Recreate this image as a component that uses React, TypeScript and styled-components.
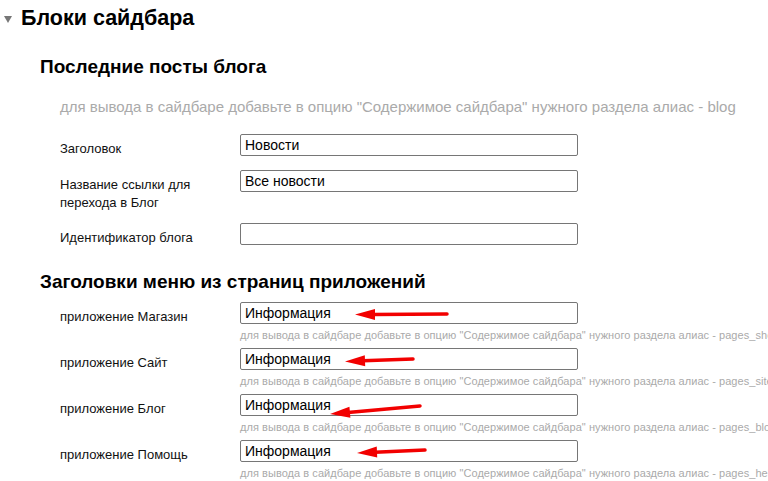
import React from "react";
import styled, { createGlobalStyle } from "styled-components";

const Global = createGlobalStyle`
  html, body { margin: 0; padding: 0; background: #fff; overflow: hidden; }
  body { font-family: "Liberation Sans", Arial, sans-serif; color: #000; }
`;

const Page = styled.div`
  width: 768px;
  height: 481px;
  overflow: hidden;
  padding-top: 6px;
  box-sizing: border-box;
`;

const TitleRow = styled.div`
  display: flex;
  align-items: center;
  gap: 9px;
  padding-left: 4px;
  height: 24px;
`;

const Caret = styled.span`
  width: 0;
  height: 0;
  border-left: 4px solid transparent;
  border-right: 4px solid transparent;
  border-top: 7px solid #777;
  margin-top: 2px;
`;

const Title = styled.h1`
  margin: 0;
  font-size: 21.5px;
  line-height: 24px;
  font-weight: bold;
`;

const Section = styled.section<{ $top: number }>`
  margin-top: ${(p) => p.$top}px;
  padding-left: 40px;
`;

const SectionTitle = styled.h2<{ $gap: number }>`
  margin: 0 0 ${(p) => p.$gap}px 0;
  font-size: 19px;
  line-height: 22px;
  height: 22px;
  font-weight: bold;
`;

const Intro = styled.div`
  padding-left: 20px;
  font-size: 15px;
  line-height: 16px;
  height: 16px;
  color: #aaa;
  white-space: nowrap;
  margin-bottom: 19px;
`;

const Rows = styled.div<{ $gap: number }>`
  display: flex;
  flex-direction: column;
  gap: ${(p) => p.$gap}px;
  padding-left: 20px;
`;

const Row = styled.div`
  display: grid;
  grid-template-columns: 180px 1fr;
  align-items: start;
`;

const Label = styled.label<{ $lh?: number }>`
  font-size: 13px;
  line-height: ${(p) => p.$lh ?? 18}px;
  padding-top: 6px;
  color: #111;
`;

const Field = styled.div`
  position: relative;
  display: flex;
  flex-direction: column;
  min-width: 0;
`;

const Input = styled.input`
  width: 338px;
  height: 22px;
  box-sizing: border-box;
  border: 1px solid #767676;
  border-radius: 2px;
  padding: 0 4px;
  font-family: "Liberation Sans", Arial, sans-serif;
  font-size: 14px;
  color: #000;
  background: #fff;
  outline: none;
`;

const Hint = styled.div`
  margin-top: 4px;
  font-size: 11px;
  letter-spacing: 0.05px;
  line-height: 14px;
  color: #aaa;
  white-space: nowrap;
`;

const ArrowSvg = styled.svg`
  position: absolute;
  left: 0;
  top: 0;
  overflow: visible;
  pointer-events: none;
`;

type ArrowProps = { tx: number; ty: number; hx: number; hy: number };

function Arrow({ tx, ty, hx, hy }: ArrowProps) {
  const dx = hx - tx;
  const dy = hy - ty;
  const len = Math.hypot(dx, dy);
  const ux = dx / len;
  const uy = dy / len;
  const hl = 20;
  const hw = 5.5;
  const bx = hx - ux * hl;
  const by = hy - uy * hl;
  const nx = -uy;
  const ny = ux;
  const pts = `${hx},${hy} ${bx + nx * hw},${by + ny * hw} ${bx - nx * hw},${by - ny * hw}`;
  return (
    <ArrowSvg width={338} height={22}>
      <line x1={tx} y1={ty} x2={bx + ux * 2} y2={by + uy * 2} stroke="#f20000" strokeWidth={3.5} strokeLinecap="round" />
      <polygon points={pts} fill="#f20000" />
    </ArrowSvg>
  );
}

const hint = (alias: string) =>
  `для вывода в сайдбаре добавьте в опцию "Содержимое сайдбара" нужного раздела алиас - ${alias}`;

const apps = [
  { label: "приложение Магазин", alias: "pages_shop", arrow: { tx: 207, ty: 12, hx: 115, hy: 12.5 } },
  { label: "приложение Сайт", alias: "pages_site", arrow: { tx: 173, ty: 11, hx: 105, hy: 13.5 } },
  { label: "приложение Блог", alias: "pages_blog", arrow: { tx: 180, ty: 12, hx: 90, hy: 20 } },
  { label: "приложение Помощь", alias: "pages_helpdesk", arrow: { tx: 185, ty: 10, hx: 117, hy: 13 } },
];

export default function App() {
  return (
    <Page>
      <Global />
      <TitleRow>
        <Caret />
        <Title>Блоки сайдбара</Title>
      </TitleRow>

      <Section $top={26}>
        <SectionTitle $gap={21}>Последние посты блога</SectionTitle>
        <Intro>{hint("blog")}</Intro>
        <Rows $gap={12}>
          <Row>
            <Label>Заголовок</Label>
            <Field>
              <Input readOnly defaultValue="Новости" />
            </Field>
          </Row>
          <Row>
            <Label $lh={17.5}>
              Название ссылки для
              <br />
              перехода в Блог
            </Label>
            <Field>
              <Input readOnly defaultValue="Все новости" />
            </Field>
          </Row>
          <Row>
            <Label>Идентификатор блога</Label>
            <Field>
              <Input readOnly defaultValue="" />
            </Field>
          </Row>
        </Rows>
      </Section>

      <Section $top={24}>
        <SectionTitle $gap={9}>Заголовки меню из страниц приложений</SectionTitle>
        <Rows $gap={6}>
          {apps.map((a) => (
            <Row key={a.alias}>
              <Label>{a.label}</Label>
              <Field>
                <Input readOnly defaultValue="Информация" />
                <Hint>{hint(a.alias)}</Hint>
                <Arrow {...a.arrow} />
              </Field>
            </Row>
          ))}
        </Rows>
      </Section>
    </Page>
  );
}
